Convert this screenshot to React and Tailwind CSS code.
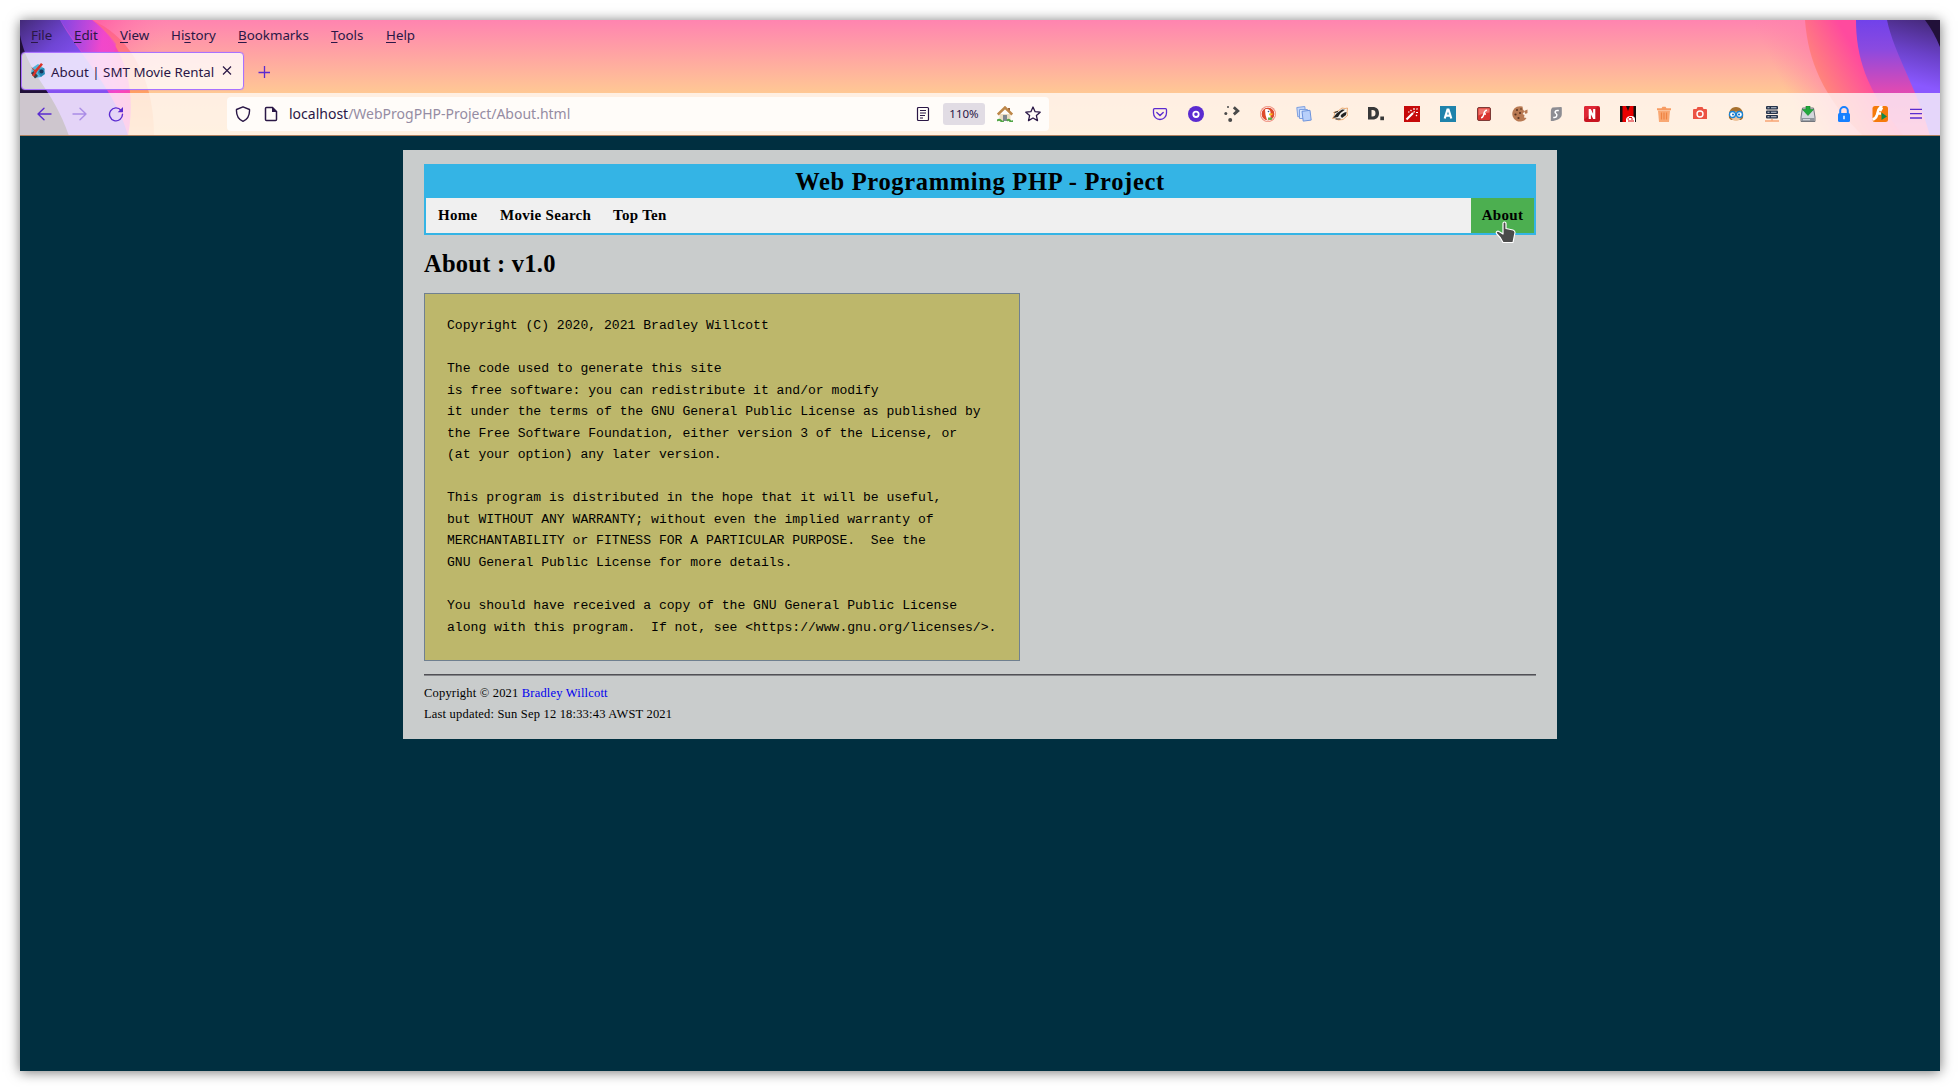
import React from "react";

const Svg = ({ s = 16, children, ...p }) => (
  <svg width={s} height={s} viewBox={`0 0 ${s} ${s}`} fill="none" className="shrink-0" {...p}>
    {children}
  </svg>
);

function ThemeArt() {
  return (
    <svg className="absolute left-0 top-0" width="1920" height="116" viewBox="0 0 1920 116">
      <defs>
        <linearGradient id="sky" x1="0" y1="0" x2="0" y2="1">
          <stop offset="0" stopColor="#ff84b0" />
          <stop offset="0.63" stopColor="#ffc894" />
          <stop offset="1" stopColor="#ffd08e" />
        </linearGradient>
        <linearGradient id="haze" gradientUnits="userSpaceOnUse" x1="80" y1="0" x2="145" y2="22">
          <stop offset="0" stopColor="#ff4fa0" />
          <stop offset="1" stopColor="#ff84b0" stopOpacity="0" />
        </linearGradient>
        <linearGradient id="lOrange" x1="0" y1="0" x2="0" y2="1">
          <stop offset="0" stopColor="#ff5a96" />
          <stop offset="0.35" stopColor="#ff8078" />
          <stop offset="0.7" stopColor="#ffa85e" />
          <stop offset="1" stopColor="#ffb870" />
        </linearGradient>
        <linearGradient id="lPink" gradientUnits="userSpaceOnUse" x1="45" y1="25" x2="105" y2="10">
          <stop offset="0" stopColor="#a94ae0" />
          <stop offset="0.6" stopColor="#f545c8" />
          <stop offset="1" stopColor="#ff4a9c" />
        </linearGradient>
        <linearGradient id="lPurple" gradientUnits="userSpaceOnUse" x1="0" y1="0" x2="45" y2="50">
          <stop offset="0" stopColor="#432a78" />
          <stop offset="0.6" stopColor="#6f45d4" />
          <stop offset="1" stopColor="#8350f0" />
        </linearGradient>
        <linearGradient id="lViolet" gradientUnits="userSpaceOnUse" x1="45" y1="0" x2="85" y2="10">
          <stop offset="0" stopColor="#7a45e2" />
          <stop offset="0.6" stopColor="#b548e0" />
          <stop offset="1" stopColor="#f048cc" />
        </linearGradient>
        <linearGradient id="rHaze" gradientUnits="userSpaceOnUse" x1="1760" y1="60" x2="1805" y2="38">
          <stop offset="0" stopColor="#ff86a8" stopOpacity="0" />
          <stop offset="1" stopColor="#ff80ae" stopOpacity="0.8" />
        </linearGradient>
        <linearGradient id="rPink" gradientUnits="userSpaceOnUse" x1="1790" y1="50" x2="1832" y2="25">
          <stop offset="0" stopColor="#ff8a78" />
          <stop offset="1" stopColor="#ff4a9e" />
        </linearGradient>
        <linearGradient id="rPurple" x1="0" y1="0" x2="0" y2="1">
          <stop offset="0" stopColor="#7142ea" />
          <stop offset="0.25" stopColor="#8a4ae0" />
          <stop offset="0.6" stopColor="#dd4ab4" />
          <stop offset="1" stopColor="#f55aa8" />
        </linearGradient>
        <linearGradient id="rViolet" gradientUnits="userSpaceOnUse" x1="1900" y1="0" x2="1885" y2="62">
          <stop offset="0" stopColor="#482b80" />
          <stop offset="0.5" stopColor="#6a41c8" />
          <stop offset="1" stopColor="#8a58ff" />
        </linearGradient>
      </defs>
      <rect width="1920" height="116" fill="url(#sky)" />
      <path d="M72 0H180V116H72Z" fill="url(#haze)" opacity=".6" />
      <path d="M72 0C104 14 134 50 134 116H60V0Z" fill="url(#lOrange)" />
      <path d="M72 0C100 20 118 62 108 116H0V0Z" fill="url(#lPink)" />
      <path d="M40 0H72C84 9 90 16 96 24L86 66Z" fill="url(#lViolet)" opacity=".7" />
      <path d="M0 0H40C56 30 98 74 108 116H0Z" fill="url(#lPurple)" />
      <path d="M0 15C8 56 32 66 49 116H0Z" fill="#211039" />
      <path d="M1690 0H1850V116H1690Z" fill="url(#rHaze)" />
      <path d="M1785 0C1788 40 1802 76 1843 116H1920V0Z" fill="url(#rPink)" />
      <path d="M1836 0C1836 35 1845 70 1884 116H1920V0Z" fill="url(#rPurple)" />
      <path d="M1867 0C1874 34 1898 70 1910 116H1920V0Z" fill="url(#rViolet)" />
      <path d="M1905 0Q1914 12 1920 27V0Z" fill="#211039" />
    </svg>
  );
}

const menus = [
  ["", "F", "ile", "w-[43px]"],
  ["", "E", "dit", "w-[46px]"],
  ["", "V", "iew", "w-[51px]"],
  ["Hi", "s", "tory", "w-[67px]"],
  ["", "B", "ookmarks", "w-[93px]"],
  ["", "T", "ools", "w-[55px]"],
  ["", "H", "elp", "w-[40px]"],
];

const extensions = [
  /* pocket */
  <Svg><path d="M2.500 2.700h11a1 1 0 0 1 1 1V7a6.500 6.500 0 0 1-13 0V3.700a1 1 0 0 1 1-1Z" stroke="#5b2bd0" strokeWidth="1.300" /><path d="M4.800 6.500 8 9.500l3.200-3" stroke="#5b2bd0" strokeWidth="1.400" strokeLinecap="round" /></Svg>,
  /* ring */
  <Svg><circle cx="8" cy="8" r="8" fill="#5b2bd0" /><circle cx="8" cy="8.300" r="2.700" stroke="#fff" strokeWidth="1.800" /></Svg>,
  /* launcher */
  <Svg><circle cx="1.800" cy="7.500" r="1.500" fill="#4a4a4a" /><circle cx="4" cy="1" r="1" fill="#4a4a4a" /><circle cx="6.200" cy="14" r="2" fill="#4a4a4a" /><path d="m9.800 1.200 4 3.700-4 3.500" stroke="#4a4a4a" strokeWidth="2.800" /></Svg>,
  /* duck */
  <Svg><circle cx="8" cy="8" r="8" fill="#ee8a78" /><circle cx="8" cy="8" r="6.800" fill="#de4a2c" stroke="#fff" strokeWidth=".8" /><path d="M5 3.500c3-1.200 5.500.5 5.500 3v6.500L7 14 5.500 9Z" fill="#fff" /><path d="M9 7.500h4l-1 1.800H9Z" fill="#fdc01a" /><path d="M8 11.500h4v2.300H8Z" fill="#5ab046" /><circle cx="8.500" cy="5.500" r=".8" fill="#2d4f8e" /></Svg>,
  /* copies */
  <Svg><path d="m.8 1.500 8-1 1 9.500-8 .8Z" fill="#c4d6f8" stroke="#7d9fdf" /><path d="M3.500 3.500h8v9h-8z" fill="#dce8fd" stroke="#7d9fdf" /><path d="m6 5.300 8-1 1.200 9.800-8 1Z" fill="#b8d0fb" stroke="#6c93dc" /></Svg>,
  /* badger */
  <Svg><path d="M.5 12.500 3 8 1.500 6.500 6 5l4-3 3 .5L15.500 2 15 7l1 2-5 4.500-5 .5-2.500-2Z" fill="#f6f1ea" stroke="#e79a58" strokeWidth=".8" /><path d="m1 12 3.500-4.500L10 3.500l3 .2L8.500 7 6 11Z" fill="#222" /><path d="M8.500 10c1-2 3-3.500 6-4l-.5 3-4 3Z" fill="#222" /><path d="M2.500 6.500 6 5.500M3.500 13h5" stroke="#222" strokeWidth="1.100" /></Svg>,
  /* disconnect */
  <Svg><path d="M0 1h4.500C9 1 11 3.500 11 7.200s-2 6.300-6.500 6.300H0Zm3.500 3v6.500h1c2 0 3-1 3-3.300S6.500 4 4.500 4Z" fill="#383838" fillRule="evenodd" /><rect x="12.300" y="10.500" width="3.700" height="3.700" fill="#383838" /></Svg>,
  /* wand */
  <Svg><rect width="16" height="16" fill="#c60909" /><path d="M2.500 13.500 9 7" stroke="#fff" strokeWidth="2.200" /><path d="m9.500 6.500 1.200-1.200M10 2v2M12.500 3.500l1-1M12 6.500h2M6.500 4l1 1M4 6h1.500M12 9l1 1" stroke="#fff" strokeWidth="1.200" /></Svg>,
  /* A */
  <Svg><rect width="16" height="16" fill="#1f83ab" /><path d="m4.700 12.500 2.800-9h1l2.800 9M5.700 9.700h4.600" stroke="#fff" strokeWidth="2.200" /></Svg>,
  /* flash */
  <Svg><rect x="1.500" y="1.500" width="13" height="13" rx="1.500" fill="#d8342f" stroke="#7d3a36" /><path d="M2.500 2.500h11v4q-6 0-11 3Z" fill="#ee746b" /><path d="M11 4.300C8 4.200 8 8 7.300 9.800 6.800 11.300 6 11.800 5 11.800M7.500 8H10" stroke="#fff" strokeWidth="1.500" /></Svg>,
  /* cookie */
  <Svg><path d="M10.500.6A7.700 7.700 0 1 0 14.500 12l-2.500-.5.5-2.500-2-1 2-2.500-1.500-2Z" fill="#b87952" /><path d="m12 5 3.500-1.500V7l-2 1Z" fill="#b87952" /><circle cx="5" cy="4" r="1" fill="#57311f" /><circle cx="3.500" cy="8.500" r="1.100" fill="#57311f" /><circle cx="8" cy="7" r="1" fill="#57311f" /><circle cx="6.500" cy="12" r="1.100" fill="#57311f" /><circle cx="9" cy="3" r=".8" fill="#57311f" /></Svg>,
  /* S shield */
  <Svg><path d="M4.500 1.500 13 1q.8 0 .8.800V8c0 4-4 6-8.500 7H2.800V8C2.800 4 3 2.500 4.500 1.500Z" fill="#8d8d93" /><path d="M10.800 4.500H9C7 4.500 6.500 6.500 8 7.500s1 4-1.500 4H5.200" stroke="#fff" strokeWidth="1.500" /></Svg>,
  /* N */
  <Svg><rect width="16" height="16" rx="2" fill="#c81420" /><path d="M0 2a2 2 0 0 1 2-2h12L0 14Z" fill="#de2735" /><path d="M5.800 13V3M10.200 13V3M5.800 3.500l4.400 9" stroke="#fff" strokeWidth="2.200" /></Svg>,
  /* M */
  <Svg><rect width="16" height="16" fill="#111" /><path d="M2.500 0H6l2 5 2-5h3.500v16h-11Z" fill="#e80000" /><path d="M6 13q1-3 5-3t4 3v3H6Z" fill="#fff" /><path d="M7.500 13h1.500M11 13h2M8 15h6M9 11.500h3" stroke="#d00" /></Svg>,
  /* bin */
  <Svg><path d="M1 2.300h4.500L6.500.8h3l1 1.500H15V4.300H1Z" fill="#f79b62" /><path d="M2 4.500h12L13 16H3Z" fill="#f9a873" /><path d="M5.500 6.500v7M8 6.500v7M10.500 6.500v7" stroke="#ef8443" strokeWidth="1.200" /></Svg>,
  /* camera */
  <Svg><path d="M2 3h2.500L5.500 1h5l1 2H14a1 1 0 0 1 1 1v9H1V4a1 1 0 0 1 1-1Z" fill="#ec5343" /><circle cx="8" cy="8" r="3" stroke="#fff" strokeWidth="1.400" /></Svg>,
  /* glasses */
  <Svg><path d="M1 12C0 5 3 1 8 1s8 4 7 11l-2 2H3Z" fill="#a7702e" /><path d="M3 7q5-3 10 0v4q-1 4-5 4t-5-4Z" fill="#eec49c" /><circle cx="4.500" cy="8.500" r="3" fill="#fff" stroke="#1684d8" strokeWidth="1.300" /><circle cx="11.500" cy="8.500" r="3" fill="#fff" stroke="#1684d8" strokeWidth="1.300" /><circle cx="5" cy="8.500" r="1" fill="#1565b0" /><circle cx="11" cy="8.500" r="1" fill="#1565b0" /></Svg>,
  /* server */
  <Svg><rect x="2" y="0" width="12" height="3.500" rx="1" fill="#26334a" /><rect x="2" y="4.500" width="12" height="3.500" rx="1" fill="#26334a" /><rect x="2" y="9" width="12" height="3.500" rx="1" fill="#26334a" /><path d="M3.500 1.700h2m1.500 0h5.500M3.500 6.200h2m1.500 0h5.500M3.500 10.700h2m1.500 0h5.500" stroke="#c4ccd8" strokeWidth="1.100" /><path d="M1 15h14M8 13v2" stroke="#f8a474" strokeWidth="1.500" /></Svg>,
  /* download drive */
  <Svg><path d="M2.500 2h11l1.500 9v4.500H1V11Z" fill="#d3d6dc" stroke="#73777d" /><path d="M1.500 12h13v3h-13z" fill="#8e949c" /><path d="M3 13.700h7" stroke="#dfe3e8" /><path d="M6 0h4v3.500h3.500L8 9.500 2.500 3.500H6Z" fill="#22a83c" stroke="#128428" strokeWidth=".6" /></Svg>,
  /* padlock */
  <Svg><path d="M4.200 8V4.800a3.800 3.800 0 0 1 7.600 0V8" stroke="#1680ff" strokeWidth="2" /><rect x="2" y="7" width="12" height="9" rx="1.500" fill="#1680ff" /><path d="M8 9.700v3.600" stroke="#fff" strokeWidth="1.400" /></Svg>,
  /* flash player */
  <Svg><rect x=".5" y="0" width="15.500" height="16" rx="2.500" fill="#f57a0b" /><path d="M10.500 0C6 1 6 6 5 9c-.8 2.500-2 4-4.500 4.500M5 7.500h4M10 1.500 8 5" stroke="#fff" strokeWidth="2.600" /><path d="m9.500 6.500 5.500 4-5.500 3.500Z" fill="#0c8a4c" /></Svg>,
  /* menu */
  <Svg><path d="M2 3.400h12M2 7.700h12M2 12h12" stroke="#5b2bd0" strokeWidth="1.300" /></Svg>,
];

const notice = `Copyright (C) 2020, 2021 Bradley Willcott

The code used to generate this site
is free software: you can redistribute it and/or modify
it under the terms of the GNU General Public License as published by
the Free Software Foundation, either version 3 of the License, or
(at your option) any later version.

This program is distributed in the hope that it will be useful,
but WITHOUT ANY WARRANTY; without even the implied warranty of
MERCHANTABILITY or FITNESS FOR A PARTICULAR PURPOSE.  See the
GNU General Public License for more details.

You should have received a copy of the GNU General Public License
along with this program.  If not, see <https://www.gnu.org/licenses/>.`;

function BrowserChrome() {
  return (
    <header className="relative h-[116px] shrink-0 overflow-hidden font-['Noto_Sans',sans-serif] text-[#2a1746]">
      <ThemeArt />
      <div className="relative flex h-full flex-col">
        <div className="flex h-8 items-start pl-[11px] text-[13.33px] leading-[30px]">
          {menus.map(([a, u, b, w]) => (
            <span key={u + b} className={`${w} whitespace-nowrap`}>
              {a}<span className="underline underline-offset-2">{u}</span>{b}
            </span>
          ))}
        </div>
        <div className="flex h-[41px] items-start pl-px">
          <div className="flex h-[38px] w-[223px] items-center rounded border border-[#a972ff] bg-white/80 pl-2 shadow-[0_0_1px_#a972ff]">
            <Svg>
              <path d="m2 5 6-4 7 5-4 8-6 1-4-5Z" fill="#55b4d8" />
              <path d="m1 10 3-2 4 5-3 2.500Z" fill="#3d4149" />
              <path d="m9 6 5-1 1 6-4 3-3-4Z" fill="#2788b4" />
              <circle cx="11.500" cy="8.500" r="2" fill="#19365c" />
              <path d="m1 4 4 3 6-7 2 1.500L7.500 8 4 13.500 2 12.500 4.500 8.500Z" fill="#dc3328" />
            </Svg>
            <span className="ml-[5px] w-[168px] whitespace-nowrap pt-[3px] text-[13.33px]">About | SMT Movie Rental</span>
            <Svg s={12} className="ml-[2px] shrink-0"><path d="m2 1.500 8 8m0-8-8 8" stroke="#2a1746" strokeWidth="1.200" /></Svg>
          </div>
          <Svg s={12} className="ml-[14px] mt-[14px]"><path d="M6.500 0v12M.5 6.500h12" stroke="#5b2bd0" strokeWidth="1.300" /></Svg>
        </div>
        <div className="flex h-[43px] items-center border-b border-[#b0805f] bg-[#fffaf8]/78">
          <div className="flex w-[207px] items-center gap-5 pl-4">
            <Svg><path d="M8 2.300 2 8l6 5.700M2 8h13" stroke="#5b2bd0" strokeWidth="1.400" strokeLinecap="round" strokeLinejoin="round" /></Svg>
            <Svg opacity=".42"><path d="M8 2.300 14 8l-6 5.700M14 8H1" stroke="#5b2bd0" strokeWidth="1.400" strokeLinecap="round" strokeLinejoin="round" /></Svg>
            <Svg><path d="M13 4.200A6.500 6.500 0 1 0 14.500 8.300" stroke="#5b2bd0" strokeWidth="1.400" strokeLinecap="round" /><path d="M15 1v5.300H9.700Z" fill="#5b2bd0" /></Svg>
          </div>
          <div className="flex h-[34px] w-[822px] items-center rounded bg-white/80 pl-2">
            <Svg><path d="M8 .8 14.500 3.500C14.800 8.500 13 13 8 15.300 3 13 1.200 8.500 1.500 3.500Z" stroke="#2a1746" strokeWidth="1.400" strokeLinejoin="round" /></Svg>
            <Svg className="ml-3 shrink-0"><path d="M3.500 1.500h6l4 4v8a1 1 0 0 1-1 1h-9a1 1 0 0 1-1-1v-11a1 1 0 0 1 1-1Z" stroke="#2a1746" strokeWidth="1.500" /><path d="M9 1v5h5Z" fill="#2a1746" /></Svg>
            <span className="ml-[10px] whitespace-nowrap pb-[2px] text-[14px]">localhost<span className="text-[#958ca3]">/WebProgPHP-Project/About.html</span></span>
            <div className="ml-auto flex items-center pr-[8px]">
              <Svg><path d="M3.500 1.500h9a1 1 0 0 1 1 1v11a1 1 0 0 1-1 1h-9a1 1 0 0 1-1-1v-11a1 1 0 0 1 1-1ZM5 4.500h6M5 7h6M5 9.500h5M5 12h3" stroke="#2a1746" strokeWidth="1.200" /></Svg>
              <span className="ml-3 flex h-[22px] w-[42px] items-center justify-center rounded-[3px] bg-[#e1dce4] text-[11.5px]">110%</span>
              <Svg className="ml-3 shrink-0"><path d="M2.500 8h11v7h-11Z" fill="#ebdcc0" /><path d="M11 2h2v4h-2z" fill="#9a643b" /><path d="m.8 8.500 7.200-7 7.200 7" stroke="#bd8648" strokeWidth="2.500" /><path d="M6 9h4v6H6Z" fill="#7f8790" /><path d="M0 14.800q2-2 4 0t2 0M10 14.800q2-2 3 0t3 0" stroke="#4fa545" strokeWidth="2" /></Svg>
              <Svg className="ml-3 shrink-0"><path d="m8 1 2.100 4.700 5.100.5-3.800 3.400 1.100 5L8 12l-4.500 2.600 1.100-5L.8 6.200l5.100-.5Z" stroke="#2a1746" strokeWidth="1.300" strokeLinejoin="round" /></Svg>
            </div>
          </div>
          <div className="ml-auto flex pr-[6px]">
            {extensions.map((icon, i) => (
              <span key={i} className="flex w-9 justify-center">{icon}</span>
            ))}
          </div>
        </div>
      </div>
    </header>
  );
}

function Page() {
  return (
    <main className="flex grow items-start justify-center bg-[#002f40] pt-[14px] font-['Liberation_Serif',serif] text-black">
      <div className="h-[589px] w-[1154px] bg-[#c9cccc] px-[21px] pt-[14px]">
        <h1 className="flex h-[34px] items-center justify-center bg-[#34b4e5] pt-[2px] text-[24.5px] font-bold leading-none tracking-[0.67px]">
          Web Programming PHP - Project
        </h1>
        <nav className="relative flex h-[37px] border-2 border-t-0 border-[#34b4e5] bg-[#f0f0f0] text-[15px] font-bold leading-[35px] tracking-[0.3px]">
          <a className="ml-3 w-[62px] whitespace-nowrap">Home</a>
          <a className="w-[113px] whitespace-nowrap">Movie Search</a>
          <a className="whitespace-nowrap">Top Ten</a>
          <a className="ml-auto w-[63px] bg-[#4caf50] text-center">About</a>
          <svg className="absolute left-[1068px] top-[23px]" width="24" height="24" viewBox="0 0 24 24">
            <path d="M9 2.500c0-2 3-2 3 0v5l7 1.500c1.500.5 2 1 2 2.500l-1 5-1 5H9L6.500 17 2.500 12.500c-1-1.500 1-3 2.500-2L9 13Z" fill="#4b4b4b" stroke="#fff" strokeWidth="1.200" strokeLinejoin="round" />
          </svg>
        </nav>
        <h2 className="mt-[12px] h-[32px] text-[24.5px] font-bold leading-[34px] tracking-[0.25px]">About : v1.0</h2>
        <pre className="mt-[14px] h-[368px] w-[596px] border border-[#708090] bg-[#bdb76b] px-[22px] pt-[21px] font-['Liberation_Mono',monospace] text-[13.09px] leading-[21.55px]">{notice}</pre>
        <hr className="mt-[13px] h-[2px] border-b border-t border-b-[#85868a] border-t-[#505055]" />
        <footer className="pt-[7px] text-[12.5px] leading-[21.3px] tracking-[0.19px]">
          <p>Copyright © 2021 <a className="text-[#0000ee]">Bradley Willcott</a></p>
          <p>Last updated: Sun Sep 12 18:33:43 AWST 2021</p>
        </footer>
      </div>
    </main>
  );
}

export default function App() {
  return (
    <div className="h-[1091px] w-[1960px] overflow-hidden bg-white p-5">
      <div className="flex h-[1051px] w-[1920px] flex-col shadow-[0_1px_12px_rgba(0,0,0,0.55)]">
        <BrowserChrome />
        <Page />
      </div>
    </div>
  );
}
